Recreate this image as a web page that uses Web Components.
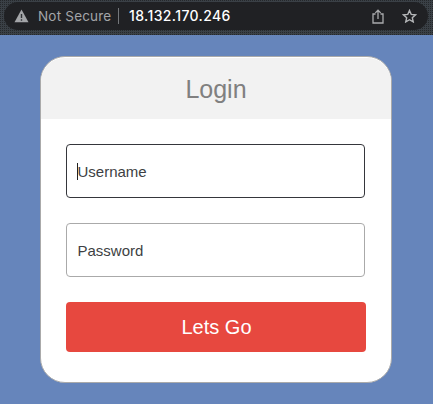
<!DOCTYPE html>
<html lang="en">
<head>
<meta charset="utf-8">
<title>Login</title>
<style>
html, body { margin: 0; height: 100%; overflow: hidden; background: #6685bb; font-family: "Liberation Sans", Arial, sans-serif; }
</style>
</head>
<body>
<login-page></login-page>
<script>
const define = (name, html) => customElements.define(name, class extends HTMLElement {
  constructor() {
    super();
    this.attachShadow({ mode: 'open' }).innerHTML = html;
  }
});

define('address-bar', `
<style>
:host { display: block; box-sizing: border-box; height: 35px; padding: 2px 5px 5px 4px; background: radial-gradient(circle at .5px .5px, #25282b .6px, transparent .7px) 0 0 / 2px 2px #3a4046; }
.pill { display: flex; align-items: center; box-sizing: border-box; height: 28px; padding: 0 11px 0 10px; border-radius: 14px; background: #202124; line-height: 28px; white-space: nowrap; }
svg { display: block; flex: none; }
.warn { margin-right: 9px; }
.state { width: 74px; color: #a3a5a8; font-family: Inter, sans-serif; font-size: 13.5px; letter-spacing: .2px; }
.rule { width: 1px; height: 16px; margin: 0 10px 0 6px; background: #74777b; }
.url { flex: 1; color: #fff; font-family: Inter, sans-serif; font-size: 14px; font-weight: 500; letter-spacing: .38px; }
.share { margin-right: 18px; }
</style>
<div class="pill">
  <svg class="warn" width="15" height="14" viewBox="0 0 15 14"><path d="M7.5 .5 14.5 13.2H.5Z" fill="#a3a5a8"/><path d="M7.5 5v4M7.5 10.2v1.5" stroke="#303236" stroke-width="1.4"/></svg>
  <span class="state"><slot name="state"></slot></span>
  <span class="rule"></span>
  <span class="url"><slot name="url"></slot></span>
  <svg class="share" width="12" height="15" viewBox="0 0 12 15" fill="none" stroke="#a9abad" stroke-width="1.3"><path d="M3.5 5H1v9h10V5H8.500M6 10V1.300M3.300 3.900 6 1.200 8.700 3.900"/></svg>
  <svg width="15" height="14" viewBox="0 0 15 14" fill="none" stroke="#b4b6b8" stroke-width="1.4"><path d="m7.500 1.500 1.700 3.900 4.300.4-3.200 2.900.95 4.200L7.500 10.700l-3.750 2.200.95-4.200L1.500 5.800l4.300-.4Z"/></svg>
</div>`);

define('login-card', `
<style>
:host { display: flex; flex-direction: column; box-sizing: border-box; width: 352px; height: 327px; border: 1px solid #aaa; border-radius: 25px; background: #fff; overflow: hidden; padding-top: 1px; }
header { height: 61px; background: #f2f2f2; color: #808080; border-radius: 23px 23px 0 0; font-size: 25px; line-height: 62px; text-align: center; }
.body { display: flex; flex-direction: column; gap: 25px; padding: 25px; }
</style>
<header><slot name="title"></slot></header>
<div class="body"><slot></slot></div>`);

define('text-field', `
<style>
:host { display: flex; align-items: center; box-sizing: border-box; width: 299px; height: 54px; padding-left: 10.500px; border: 1px solid #aaa; border-radius: 4px; color: #3d3f43; font-size: 15px; line-height: 20px; }
:host([focused]) { border-color: #35363b; }
.caret { display: none; width: 1px; height: 17px; margin: 0 -.500px 0 -.500px; background: #222; }
:host([focused]) .caret { display: block; }
span { padding-top: 1px; }
</style>
<i class="caret"></i><span><slot></slot></span>`);

define('submit-button', `
<style>
:host { display: block; }
button { display: block; width: 300px; height: 50px; padding: 0 0 0 1px; border: 0; border-radius: 4px; background: #e7483f; color: #fff; font: 20px/50px "Liberation Sans", Arial, sans-serif; }
</style>
<button><slot></slot></button>`);

define('login-page', `
<style>
:host { display: block; }
main { padding: 21px 0 0 40px; }
</style>
<address-bar><span slot="state">Not Secure</span><span slot="url">18.132.170.246</span></address-bar>
<main>
  <login-card>
    <span slot="title">Login</span>
    <text-field focused>Username</text-field>
    <text-field>Password</text-field>
    <submit-button>Lets Go</submit-button>
  </login-card>
</main>`);
</script>
</body>
</html>
